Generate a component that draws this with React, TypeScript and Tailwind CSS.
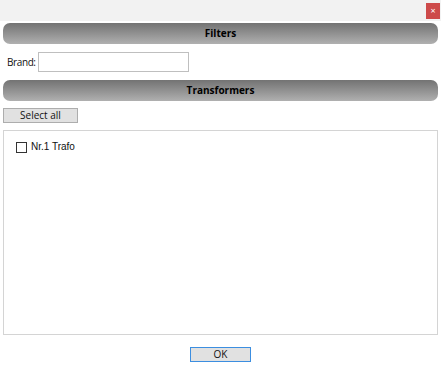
export default function App() {
  const header =
    "mx-[3px] h-[21px] rounded-[7px] bg-gradient-to-b from-[#737373] to-[#b0b0b0] flex items-center justify-center text-[10px] font-bold text-black";
  return (
    <div
      className="w-[441px] h-[368px] bg-white flex flex-col overflow-hidden"
      style={{ fontFamily: '"Open Sans", "Noto Sans", sans-serif' }}
    >
      {/* Title bar */}
      <div className="h-[21px] bg-[#f2f2f2] flex justify-end items-start pt-[3px] pr-[1px]">
        <div className="w-[14px] h-[16px] bg-[#cd4a4a] text-white text-[9px] leading-[16px] text-center">
          ×
        </div>
      </div>

      {/* Filters */}
      <div className="mt-[2px]">
        <div className={header}>Filters</div>
      </div>

      <div className="flex items-center mt-[8px] pl-[7px] gap-[2px]">
        <span className="text-[10px] tracking-[-0.4px] text-[#111]">Brand:</span>
        <div className="w-[151px] h-[20px] border border-[#bfbfbf] bg-white" />
      </div>

      {/* Transformers */}
      <div className="mt-[8px]">
        <div className={header}>Transformers</div>
      </div>

      <div className="mt-[7px] pl-[3px]">
        <div className="w-[75px] h-[15px] border border-[#adadad] bg-[#e1e1e1] text-[10px] leading-[13px] text-center text-[#111]">
          Select all
        </div>
      </div>

      <div className="mx-[3px] mt-[7px] h-[205px] border border-[#d4d4d4] px-[12px] pt-[10px]">
        <div className="flex items-center gap-[4px]">
          <div className="w-[11px] h-[11px] border border-[#333] bg-white" />
          <span className="text-[10px] leading-[12px] text-[#111]" style={{ fontFamily: '"Liberation Sans", Arial, sans-serif' }}>
            Nr.1 Trafo
          </span>
        </div>
      </div>

      <div className="flex justify-center mt-[12px]">
        <div className="w-[61px] h-[15px] border border-[#3c8ee0] bg-[#e1e1e1] text-[10px] leading-[13px] text-center text-[#111]">
          OK
        </div>
      </div>
    </div>
  );
}
